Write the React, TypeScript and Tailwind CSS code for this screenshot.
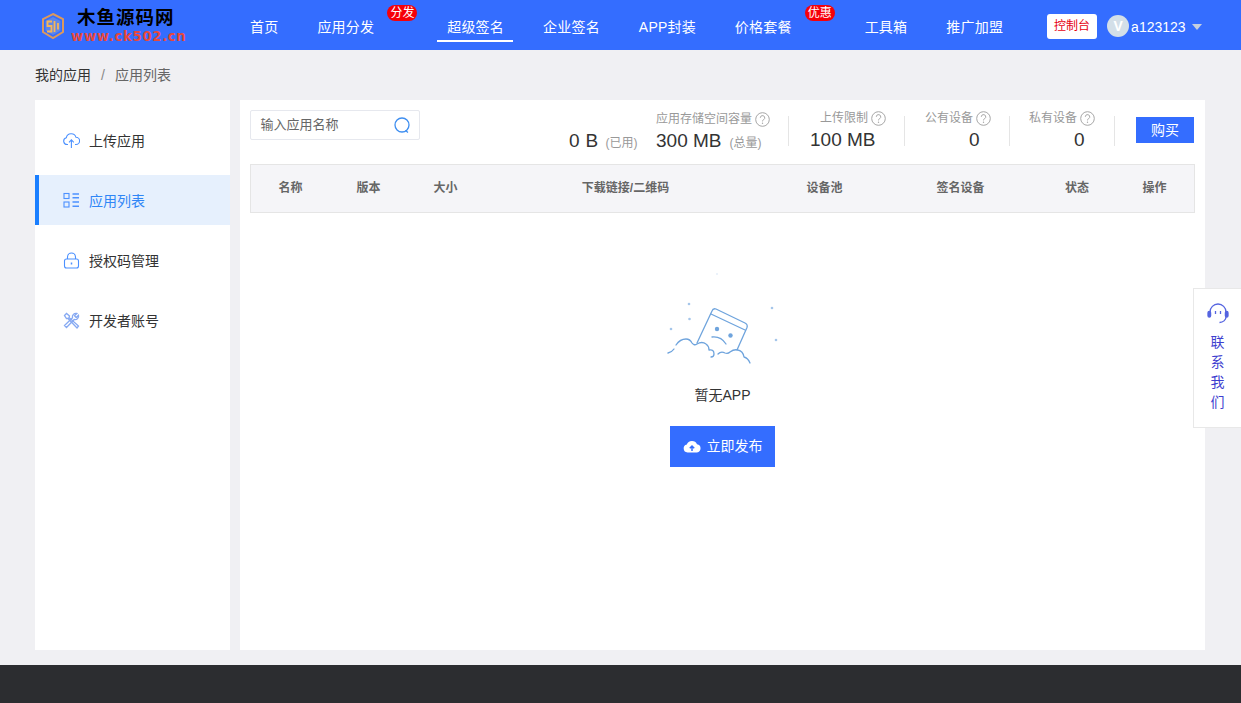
import React from "react";

const font = { fontFamily: '"Liberation Sans", "Noto Sans CJK SC", sans-serif' };

function Logo() {
  return (
    <div className="w-[250px] flex items-center pl-[41px] shrink-0">
      <svg width="24" height="28" viewBox="0 0 24 28" className="shrink-0 mt-[1px]" fill="none">
        <path d="M12 2 L22 7 V20 L12 26 L2 20 V7 Z" stroke="#ee9d4c" strokeWidth="2" opacity="0.9" />
        <path d="M12 5 L19.500 9 V18.500 L12 23 L4.500 18.500 V9 Z" fill="#7f9bdc" opacity="0.55" />
        <path d="M11 9.500H6.500V14H10.500V19.500H6M13.500 9V20M17 11V17.500" stroke="#f7b65a" strokeWidth="1.800" />
      </svg>
      <div className="ml-[6px] flex flex-col items-start">
        <span className="text-[18.500px] leading-[20px] font-bold text-black tracking-[1px] ml-[6px] mt-[1px]">木鱼源码网</span>
        <span className="text-[13.200px] leading-[15px] font-bold text-[#e8483c] tracking-[0.7px] mt-[1px] whitespace-nowrap" style={{ fontFamily: '"DejaVu Sans", sans-serif' }}>www.ck502.cn</span>
      </div>
    </div>
  );
}

function NavItem({ label, active, badge, last }: { label: string; active?: boolean; badge?: string; last?: boolean }) {
  return (
    <div className={`relative h-[50px] flex items-center shrink-0 ${badge ? "mr-[73px]" : last ? "" : "mr-[39px]"}`}>
      <span className="text-[14px] tracking-[0.2px] text-white leading-[20px] mt-[4px]">{label}</span>
      {active && <div className="absolute left-[-10px] right-[-9px] top-[40px] h-[2px] bg-white" />}
      {badge && (
        <span className="absolute left-[70px] top-[5px] w-[30px] h-[16px] rounded-full bg-[#f60009] text-white text-[12px] leading-[16px] text-center whitespace-nowrap">{badge}</span>
      )}
    </div>
  );
}

function Help() {
  return (
    <svg width="15" height="15" viewBox="0 0 15 15" className="shrink-0">
      <circle cx="7.500" cy="7.500" r="6.800" fill="none" stroke="#a6a6a6" strokeWidth="1" />
      <path d="M5.300 5.800a2.200 2.200 0 1 1 3.300 1.900c-.8.400-1.100.8-1.100 1.700" fill="none" stroke="#a6a6a6" strokeWidth="1" />
      <circle cx="7.500" cy="11.300" r="0.700" fill="#a6a6a6" />
    </svg>
  );
}

function SideItem({ icon, label, active }: { icon: React.ReactNode; label: string; active?: boolean }) {
  return (
    <div className={`h-[50px] flex items-center ${active ? "bg-[#e6f0fd] border-l-[4px] border-[#1a7fff] pl-[24px] text-[#2f86f6]" : "pl-[28px] text-[#333]"}`}>
      <span className="w-[17px] h-[17px] flex items-center justify-center">{icon}</span>
      <span className="ml-[9px] text-[14px] leading-[20px] mt-[1px]">{label}</span>
    </div>
  );
}

const blue = "#4c91ff";

const CloudIcon = (
  <svg width="17" height="17" viewBox="0 0 17 17" fill="none" stroke={blue} strokeWidth="1.100">
    <path d="M5 12.500H4.200A3.400 3.400 0 0 1 3.300 5.800 5 5 0 0 1 13 5.300 3.600 3.600 0 0 1 13 12.500H12" />
    <path d="M8.400 16V8M6 10.300l2.400-2.400 2.400 2.400" />
  </svg>
);
const ListIcon = (
  <svg width="17" height="17" viewBox="0 0 17 17" fill="none" stroke={blue} strokeWidth="1.100">
    <rect x="1" y="1.500" width="5" height="5" />
    <rect x="1" y="10" width="5" height="5" />
    <path d="M9.500 2h6.500M9.500 5.800h6.500M9.500 10h6.500M9.500 14.200h6.500" strokeWidth="1.500" />
  </svg>
);
const LockIcon = (
  <svg width="17" height="17" viewBox="0 0 17 17" fill="none" stroke={blue} strokeWidth="1.100">
    <rect x="1.500" y="7" width="14" height="9" rx="2" />
    <path d="M4.500 7V5a4 4 0 0 1 8 0v2" />
    <path d="M8.500 10.500v2" strokeWidth="1.500" />
  </svg>
);
const ToolIcon = (
  <svg width="17" height="17" viewBox="0 0 17 17" fill="none" stroke="#86a9f2" strokeWidth="1.300">
    <path d="M1.500 3.500 3.500 1.500l3 2.500-.5 1.500 9.500 8.500-1.500 2L5 6.500 3.500 6.500Z" />
    <path d="M15.500 3.200 13.200 5.500l-1.700-1.700L13.800 1.500a3.500 3.500 0 0 0-4.300 4.300L1.500 13.500l2 2 7.700-8a3.500 3.500 0 0 0 4.300-4.300Z" />
  </svg>
);

function Illustration() {
  return (
    <svg width="145" height="110" viewBox="0 0 145 110" fill="none" className="block">
      <g stroke="#6fa4dd" strokeWidth="1.300" strokeLinecap="round" strokeLinejoin="round">
        <path d="M47 78 62 46q1-3 4-2l29 14q3 1.500 2 4.500L87 85" />
        <path d="M61 49 95 65" />
        <path d="M62 72q9-1 14 7" />
        <path d="M18 88q4-1 6-4M26 80q4-6 10-6 4 0 6 4 2 3 5 1 5-3 9 0 3 2 3 6 5-1 5 4 0 3-3 3M68 89q3-3 7-1 3 1 5-1 4-3 8-2 5 1 6 7 4 1 6 6" />
      </g>
      <g fill="#6fa4dd">
        <circle cx="67" cy="64" r="2.200" />
        <circle cx="80.500" cy="70.500" r="2.200" />
      </g>
      <g fill="#a5c6ea">
        <circle cx="39" cy="39" r="1.300" />
        <circle cx="39.500" cy="54" r="1.300" />
        <circle cx="21" cy="64" r="1.300" />
        <circle cx="122" cy="43" r="1.300" />
        <circle cx="126" cy="75" r="1.300" />
        <circle cx="67" cy="9" r="0.800" opacity="0.5" />
      </g>
    </svg>
  );
}

const columns: [string, string][] = [
  ["名称", "w-[79px]"],
  ["版本", "w-[77px]"],
  ["大小", "w-[77px]"],
  ["下载链接/二维码", "w-[283px]"],
  ["设备池", "w-[115px]"],
  ["签名设备", "w-[157px]"],
  ["状态", "w-[76px]"],
  ["操作", "w-[79px]"],
];

export default function App() {
  return (
    <div className="min-h-screen bg-[#f0f0f3] relative" style={font}>
      <header className="h-[50px] bg-[#346dff] flex items-center">
        <Logo />
        <nav className="flex items-center">
          <NavItem label="首页" />
          <NavItem label="应用分发" badge="分发" />
          <NavItem label="超级签名" active />
          <NavItem label="企业签名" />
          <NavItem label="APP封装" />
          <NavItem label="价格套餐" badge="优惠" />
          <NavItem label="工具箱" />
          <NavItem label="推广加盟" last />
        </nav>
        <div className="ml-[44px] mt-[2px] w-[50px] h-[25px] bg-white rounded-[3px] flex items-center justify-center text-[12px] text-[#e60012]">控制台</div>
        <div className="ml-[10px] w-[22px] h-[22px] mt-[2px] rounded-full bg-[#d3dfe8] flex items-center justify-center text-white text-[14px] font-bold">V</div>
        <span className="ml-[2px] mt-[4px] text-[14px] text-white">a123123</span>
        <span className="ml-[6px] mt-[4px] w-0 h-0 border-x-[5.500px] border-x-transparent border-t-[6px] border-t-[#c5cfdf]" />
      </header>

      <div className="h-[50px] pl-[35px] flex items-center text-[14px]">
        <span className="text-[#333]">我的应用</span>
        <span className="mx-[10px] text-[#888]">/</span>
        <span className="text-[#666]">应用列表</span>
      </div>

      <main className="px-[35px] flex gap-[10px] h-[550px]">
        <aside className="w-[195px] bg-white pt-[15px] flex flex-col gap-[10px]">
          <SideItem icon={CloudIcon} label="上传应用" />
          <SideItem icon={ListIcon} label="应用列表" active />
          <SideItem icon={LockIcon} label="授权码管理" />
          <SideItem icon={ToolIcon} label="开发者账号" />
        </aside>

        <section className="w-[965px] bg-white px-[10px] pt-[10px]">
          <div className="h-[54px] flex items-start">
            <div className="w-[170px] h-[30px] border border-[#e6e8ee] rounded-[2px] flex items-center pl-[10px] pr-[8px] justify-between">
              <span className="text-[13px] text-[#666] ml-[-0.5px]">输入应用名称</span>
              <svg width="18" height="18" viewBox="0 0 18 18" fill="none" stroke="#3e8ef0" strokeWidth="1.300">
                <circle cx="9" cy="9" r="7" />
                <path d="M12.500 14.500 15 16.500" />
              </svg>
            </div>

            <div className="flex-1 flex items-start text-[#333] pl-[149px]">
              <div className="w-[87px] pt-[19px] flex items-baseline whitespace-nowrap">
                <span className="text-[19px] leading-[24px] tracking-[0.3px]">0 B</span>
                <span className="ml-[7px] text-[12px] text-[#999]">(已用)</span>
              </div>
              <div className="w-[132px]">
                <div className="h-[16px] mt-[1px] flex items-center text-[12px] text-[#999] whitespace-nowrap">
                  应用存储空间容量<span className="ml-[3px]"><Help /></span>
                </div>
                <div className="flex items-baseline mt-[2px] whitespace-nowrap">
                  <span className="text-[19px] leading-[24px]">300 MB</span>
                  <span className="ml-[8px] text-[12px] text-[#999]">(总量)</span>
                </div>
              </div>
              <Stat w="w-[116px]" label="上传限制" value="100 MB" labelPl="pl-[31px]" valuePl="pl-[21px]" />
              <Stat w="w-[105px]" label="公有设备" value="0" labelPl="pl-[20px]" valuePl="pl-[64px]" />
              <Stat w="w-[105px]" label="私有设备" value="0" labelPl="pl-[19px]" valuePl="pl-[64px]" />
              <div className="border-l border-[#e5e5e5] h-[30px] mt-[6px] pl-[21px]">
                <div className="w-[58px] h-[26px] mt-[1px] bg-[#346dff] text-white text-[14px] flex items-center justify-center">购买</div>
              </div>
            </div>
          </div>

          <div className="h-[49px] w-[945px] flex items-center pb-[2px] bg-[#f5f5f8] border border-[#e5e5e5] text-[12px] font-bold text-[#666]">
            {columns.map(([t, w]) => (
              <div key={t} className={`${w} text-center shrink-0`}>{t}</div>
            ))}
          </div>

          <div className="flex flex-col items-center pt-[52px]">
            <Illustration />
            <div className="mt-[10px] text-[14px] leading-[20px] text-[#333]">暂无APP</div>
            <div className="mt-[21px] w-[105px] h-[41px] bg-[#346dff] text-white text-[14px] flex items-center justify-center">
              <svg width="18" height="14" viewBox="0 0 18 14" className="mr-[6px] mt-[-2px]">
                <path d="M4.500 13.500A4 4 0 0 1 3.800 5.600 5.500 5.500 0 0 1 14 5.200 4.200 4.200 0 0 1 14 13.500Z" fill="#fff" />
                <path d="M9 12V7.500M6.800 9.300 9 7l2.200 2.300" stroke="#346dff" strokeWidth="1.500" fill="none" />
              </svg>
              <span>立即发布</span>
            </div>
          </div>
        </section>
      </main>

      <footer className="h-[38px] mt-[15px] bg-[#2c2d30]" />

      <div className="absolute right-0 top-[288px] w-[48px] h-[140px] bg-white border border-[#e8e8e8] border-r-0 flex flex-col items-center pt-[14px]">
        <svg width="22" height="22" viewBox="0 0 22 22" fill="none" stroke="#5564e0" strokeWidth="1.300">
          <path d="M3 11V9a8 8 0 0 1 16 0v2" />
          <rect x="1" y="8.500" width="2.600" height="5.500" rx="1.300" fill="#5564e0" />
          <rect x="18.400" y="8.500" width="2.600" height="5.500" rx="1.300" fill="#5564e0" />
          <path d="M19 14c0 3-3 5.500-6.500 5.500" />
          <path d="M8.500 8v3M13.500 8v3" />
        </svg>
        <div className="mt-[7px] text-[14px] leading-[20px] text-[#3f3fcf] w-[14px] text-center">联系我们</div>
      </div>
    </div>
  );
}

function Stat({ w, label, value, labelPl, valuePl }: { w: string; label: string; value: string; labelPl: string; valuePl: string }) {
  return (
    <div className={`${w} relative border-l border-[#e5e5e5] h-[30px] mt-[6px]`}>
      <div className={`absolute top-[-6px] left-0 ${labelPl} h-[16px] flex items-center text-[12px] text-[#999] whitespace-nowrap`}>
        {label}
        <span className="ml-[3px]"><Help /></span>
      </div>
      <div className={`absolute top-[12px] left-0 ${valuePl} text-[19px] leading-[24px] text-[#333] whitespace-nowrap`}>{value}</div>
    </div>
  );
}
